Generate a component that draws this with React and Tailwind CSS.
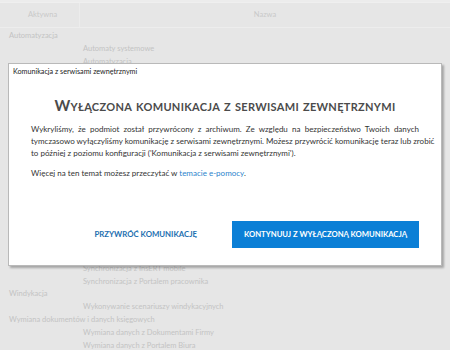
const rows = [
  { label: 'Automatyzacja', level: 0 },
  { label: 'Automaty systemowe', level: 1 },
  { label: 'Automatyzacja', level: 1 },
  { label: 'Harmonogram zadań', level: 1 },
  { label: 'Bankowość', level: 0 },
  { label: 'Import wyciągów bankowych', level: 1 },
  { label: 'Eksport przelewów', level: 1 },
  { label: 'e-Deklaracje', level: 0 },
  { label: 'Wysyłka e-Deklaracji', level: 1 },
  { label: 'JPK', level: 0 },
  { label: 'Wysyłka plików JPK', level: 1 },
  { label: 'KSeF', level: 0 },
  { label: 'Wysyłka faktur do KSeF', level: 1 },
  { label: 'Pobieranie faktur z KSeF', level: 1 },
  { label: 'Synchronizacja', level: 0 },
  { label: 'Synchronizacja z e-Sklepem', level: 1 },
  { label: 'Synchronizacja z Subiektem', level: 1 },
  { label: 'Synchronizacja z Rewizorem', level: 1 },
  { label: 'Synchronizacja z InsERT mobile', level: 1 },
  { label: 'Synchronizacja z Portalem pracownika', level: 1 },
  { label: 'Windykacja', level: 0 },
  { label: 'Wykonywanie scenariuszy windykacyjnych', level: 1 },
  { label: 'Wymiana dokumentów i danych księgowych', level: 0 },
  { label: 'Wymiana danych z Dokumentami Firmy', level: 1 },
  { label: 'Wymiana danych z Portalem Biura', level: 1 },
]

export default function App() {
  return (
    <div className="relative w-[450px] h-[350px] overflow-hidden bg-[#e6e6e6] font-['Lato',sans-serif]">
      {/* background list */}
      <div className="h-[3px] bg-[#ececec] border-b border-[#efefef]" />
      <div className="flex h-[25px] border-b border-[#ededed] text-[7.5px] text-[#c9c9c9]">
        <div className="w-[80px] flex items-center justify-center pl-[6px] border-r border-[#ececec]">Aktywna</div>
        <div className="flex-1 flex items-center justify-center">Nazwa</div>
      </div>
      <div className="pt-[1px] text-[7.5px] text-[#c3c3c3]">
        {rows.map((r, i) => (
          <div key={i} className="h-[12.95px] flex items-center leading-none">
            {r.level === 0 ? (
              <span className="pl-[9px] whitespace-nowrap">{r.label}</span>
            ) : (
              <span className="pl-[83px] whitespace-nowrap">{r.label}</span>
            )}
          </div>
        ))}
      </div>

      {/* dialog */}
      <div className="absolute left-[8px] top-[63px] w-[434px] h-[203px] bg-white border border-[#b9b9b9] shadow-[2px_2px_2px_rgba(0,0,0,0.28)]">
        <div className="h-[17px] flex items-center pl-[4px] text-[7.2px] text-[#222]">
          Komunikacja z serwisami zewnętrznymi
        </div>
        <h1 className="mt-[16px] text-center text-[15px] leading-[16px] font-bold text-[#4b4b4b] [font-variant:small-caps] tracking-[0.3px]">
          Wyłączona komunikacja z serwisami zewnętrznymi
        </h1>
        <div className="mt-[10px] px-[22px] text-[8px] leading-[12px] text-[#333]">
          <div className="whitespace-nowrap text-justify [text-align-last:justify]">
            Wykryliśmy, że podmiot został przywrócony z archiwum. Ze względu na bezpieczeństwo Twoich danych
          </div>
          <div className="whitespace-nowrap text-justify [text-align-last:justify]">
            tymczasowo wyłączyliśmy komunikację z serwisami zewnętrznymi. Możesz przywrócić komunikację teraz lub zrobić
          </div>
          <div>to później z poziomu konfiguracji ('Komunikacja z serwisami zewnętrznymi').</div>
          <div className="mt-[8px]">
            Więcej na ten temat możesz przeczytać w <span className="text-[#2a83cc]">temacie e-pomocy</span>.
          </div>
        </div>
        <div className="mt-[42px] pr-[22px] flex justify-end items-center gap-[35px]">
          <button className="text-[7.8px] font-bold text-[#1d6fb0]">PRZYWRÓĆ KOMUNIKACJĘ</button>
          <button className="w-[187px] h-[27px] bg-[#0b7fd6] text-white text-[7.7px] font-bold">
            KONTYNUUJ Z WYŁĄCZONĄ KOMUNIKACJĄ
          </button>
        </div>
      </div>
    </div>
  )
}
